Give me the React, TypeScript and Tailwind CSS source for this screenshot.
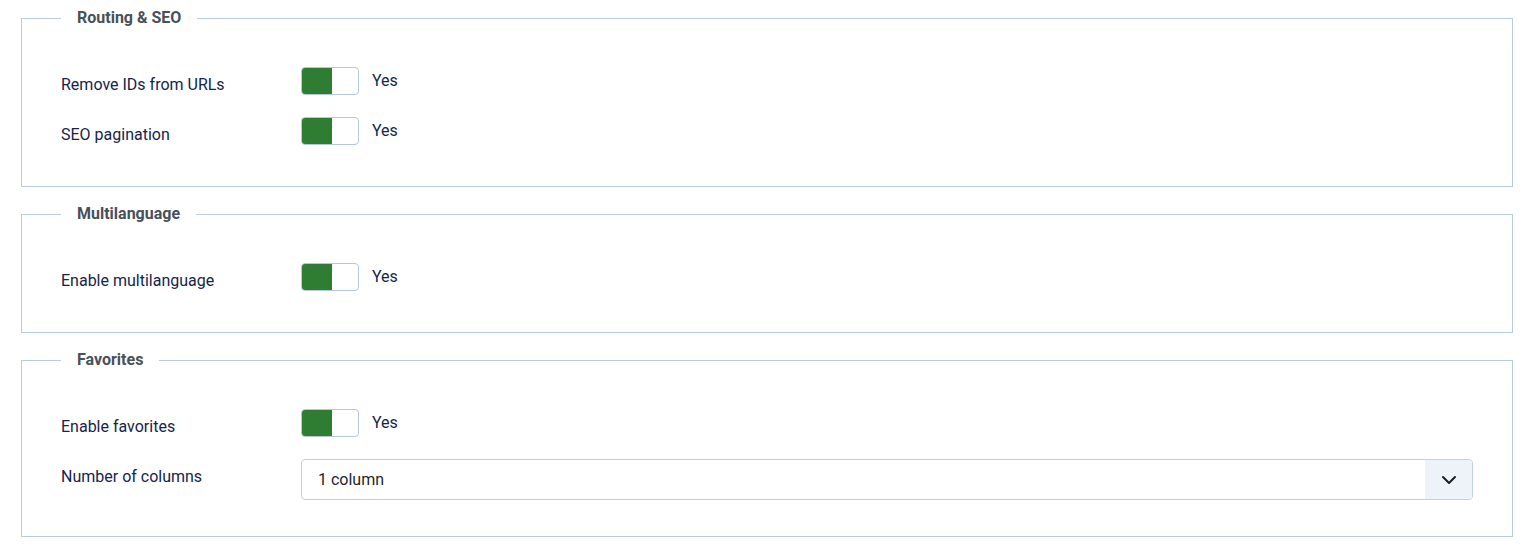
import { ChevronDown } from "lucide-react";

type Row =
  | { kind: "toggle"; label: string; on: boolean }
  | { kind: "select"; label: string; value: string };

const sections: { title: string; rows: Row[] }[] = [
  {
    title: "Routing & SEO",
    rows: [
      { kind: "toggle", label: "Remove IDs from URLs", on: true },
      { kind: "toggle", label: "SEO pagination", on: true },
    ],
  },
  {
    title: "Multilanguage",
    rows: [{ kind: "toggle", label: "Enable multilanguage", on: true }],
  },
  {
    title: "Favorites",
    rows: [
      { kind: "toggle", label: "Enable favorites", on: true },
      { kind: "select", label: "Number of columns", value: "1 column" },
    ],
  },
];

function Toggle({ on }: { on: boolean }) {
  return (
    <div className="flex items-center gap-[13px]">
      <div className="flex h-[28px] w-[58px] overflow-hidden rounded-[4px] border border-[#b7c6db] bg-white">
        <div className={on ? "w-[30px] bg-[#2e7d32]" : "w-[30px] bg-white"} />
        <div className="flex-1" />
      </div>
      <span className="text-[16px] leading-[22px] text-[#15254a]">{on ? "Yes" : "No"}</span>
    </div>
  );
}

function Select({ value }: { value: string }) {
  return (
    <div className="flex h-[41px] flex-1 overflow-hidden rounded-[4px] border border-[#c3cfe2] bg-white">
      <div className="flex flex-1 items-center pl-[16px] text-[16px] text-[#22262a]">{value}</div>
      <div className="flex w-[47px] items-center justify-center bg-[#eef2f9]">
        <ChevronDown size={24} strokeWidth={2} className="text-[#1b1f23]" />
      </div>
    </div>
  );
}

export default function App() {
  return (
    <div
      className="bg-white pl-[21px] pr-[23px] pt-[7px]"
      style={{ fontFamily: "Roboto, 'Liberation Sans', sans-serif" }}
    >
      {sections.map((s) => (
        <fieldset
          key={s.title}
          className="mb-[16px] border border-[#bccbe0] px-[39px] pb-[19px]"
        >
          <legend className="ml-0 px-[16px] text-[16px] font-bold leading-[22px] text-[#495057]">
            {s.title}
          </legend>
          <div className="pt-[38px]">
            {s.rows.map((r) => (
              <div key={r.label} className="mb-[17px] flex min-h-[33px] items-start">
                <div className="w-[240px] shrink-0 pt-[7px] text-[16px] leading-[22px] text-[#15254a]">
                  {r.label}
                </div>
                {r.kind === "toggle" ? <Toggle on={r.on} /> : <Select value={r.value} />}
              </div>
            ))}
          </div>
        </fieldset>
      ))}
    </div>
  );
}
